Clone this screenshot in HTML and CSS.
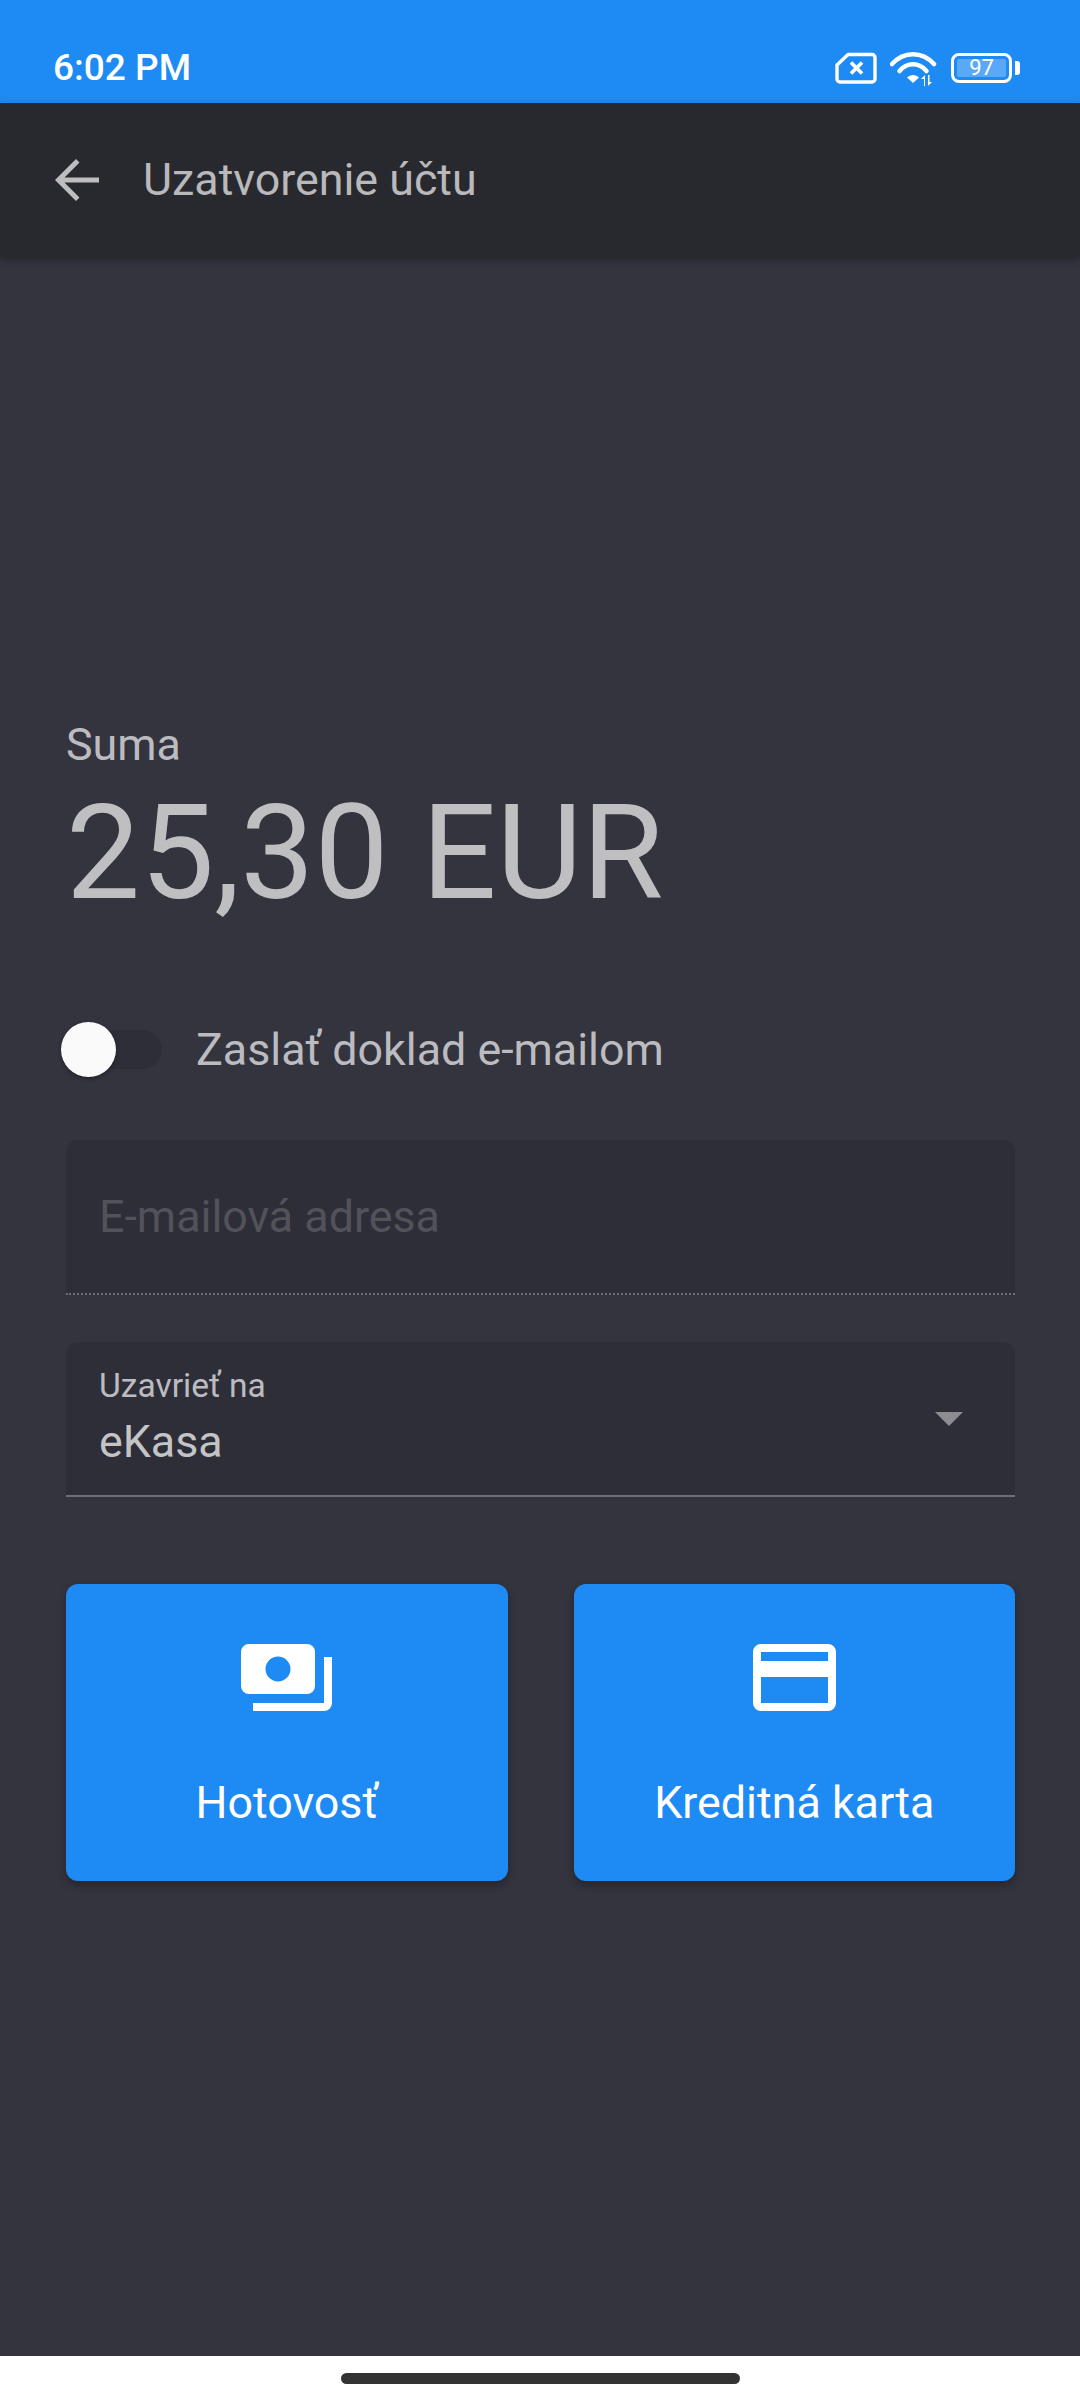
FILE: index.html
```html
<!DOCTYPE html>
<html lang="sk">
<head>
<meta charset="utf-8">
<title>Uzatvorenie účtu</title>
<link rel="stylesheet" href="styles.css">
</head>
<body>
<div class="screen">
  <header class="statusbar">
    <span class="time">6:02 PM</span>
    <div class="status-icons">
      <svg class="ic-sim" width="42" height="32" viewBox="0 0 42 32"><path d="M13 2.500H37a3 3 0 0 1 3 3V27a3 3 0 0 1-3 3H5a3 3 0 0 1-3-3V13z" fill="none" stroke="#fff" stroke-width="3.400" stroke-linejoin="round"/><path d="M16 10.500l11 11M27 10.500l-11 11" stroke="#fff" stroke-width="3.600"/></svg>
      <svg class="ic-wifi" width="48" height="36" viewBox="0 0 48 36"><path d="M2 14C14 1 32 1 44 14" fill="none" stroke="#fff" stroke-width="4.500" stroke-linecap="round"/><path d="M9.500 21C17 12 29 12 36.500 21" fill="none" stroke="#fff" stroke-width="4.500" stroke-linecap="round"/><path d="M17 27.500C20.500 24 25.500 24 29 27.500L23 33z" fill="#fff"/><path d="M34 36v-7h-3l4-4v11zM38 25v11l4-4h-2.500v-7z" fill="#fff"/></svg>
      <div class="battery"><div class="battery-body"><span class="battery-fill">97</span></div><span class="battery-tip"></span></div>
    </div>
  </header>
  <div class="appbar">
    <svg class="back" width="44" height="44" viewBox="0 0 44 44"><path d="M44 24.500H9.500l15 15-3.500 3.500L0 22 21 1l3.500 3.500-15 15H44z" fill="#bdbdc0"/></svg>
    <h1 class="title">Uzatvorenie účtu</h1>
  </div>
  <main class="content">
    <div class="sum-label">Suma</div>
    <div class="sum-value">25,30 EUR</div>
    <div class="toggle-row">
      <div class="toggle"><span class="track"></span><span class="knob"></span></div>
      <span class="toggle-label">Zaslať doklad e-mailom</span>
    </div>
    <div class="field field-email"><span class="placeholder">E-mailová adresa</span></div>
    <div class="field field-select">
      <div class="select-text">
        <span class="select-label">Uzavrieť na</span>
        <span class="select-value">eKasa</span>
      </div>
      <span class="caret"></span>
    </div>
    <div class="actions">
      <button class="action">
        <svg width="91" height="67" viewBox="0 0 91 67"><path d="M8 0H66a8 8 0 0 1 8 8V42a8 8 0 0 1-8 8H8a8 8 0 0 1-8-8V8a8 8 0 0 1 8-8zM37 12.500a12.500 12.500 0 1 0 0 25 12.500 12.500 0 0 0 0-25z" fill="#fff" fill-rule="evenodd"/><path d="M12 63H83a4 4 0 0 0 4-4V13" fill="none" stroke="#fff" stroke-width="8"/></svg>
        <span>Hotovosť</span>
      </button>
      <button class="action">
        <svg width="83" height="67" viewBox="0 0 83 67"><path d="M8 0H75a8 8 0 0 1 8 8V59a8 8 0 0 1-8 8H8a8 8 0 0 1-8-8V8a8 8 0 0 1 8-8zM8 8V17H75V8zM8 33V59H75V33z" fill="#fff" fill-rule="evenodd"/></svg>
        <span>Kreditná karta</span>
      </button>
    </div>
  </main>
  <footer class="navbar"><span class="home"></span></footer>
</div>
</body>
</html>
```

FILE: styles.css
```css
* { box-sizing: border-box; }
html, body { margin: 0; padding: 0; }
body { width: 1080px; height: 2400px; overflow: hidden; font-family: Roboto, "Liberation Sans", sans-serif; background: #33343e; }
.screen { display: flex; flex-direction: column; width: 1080px; height: 2400px; }

.statusbar { height: 103px; background: #1e8bf5; color: #fff; display: flex; align-items: flex-end; justify-content: space-between; padding: 0 60px 17px 53px; flex: none; }
.time { font-size: 37px; font-weight: 500; line-height: 36px; }
.status-icons { display: flex; align-items: center; gap: 13px; }
.battery { display: flex; align-items: center; gap: 3px; }
.battery-body { width: 61px; height: 30px; border: 3px solid #fff; border-radius: 8px; padding: 3px; display: flex; }
.battery-fill { flex: 1; background: #5aa9f8; border-radius: 2px; color: #fff; font-size: 22px; line-height: 18px; text-align: center; }
.battery-tip { width: 5px; height: 14px; background: #fff; border-radius: 0 3px 3px 0; }

.appbar { height: 154px; flex: none; background: #28292f; display: flex; align-items: center; padding-left: 55px; box-shadow: 0 3px 8px rgba(0,0,0,.3); position: relative; }
.title { margin: 0 0 0 44px; font-size: 44.8px; font-weight: 400; color: #b9b9bc; line-height: 50px; }

.content { flex: 1; display: flex; flex-direction: column; padding: 463px 65px 0 66px; }
.sum-label { font-size: 44.8px; line-height: 50px; color: #bcbcc0; }
.sum-value { font-size: 132px; line-height: 156px; color: #bfbfc2; margin-top: 5px; }

.toggle-row { display: flex; align-items: center; margin-top: 91px; height: 56px; }
.toggle { position: relative; width: 96px; height: 56px; margin-left: -5px; }
.track { position: absolute; left: 10px; top: 8px; width: 91px; height: 39px; border-radius: 20px; background: #2d2e37; }
.knob { position: absolute; left: 0; top: 0; width: 55px; height: 55px; border-radius: 50%; background: #fafafa; box-shadow: 0 2px 4px rgba(0,0,0,.35); }
.toggle-label { margin-left: 39px; font-size: 44.8px; line-height: 54px; color: #bcbcc0; }

.field { background: #2e2e38; border-radius: 12px 12px 0 0; position: relative; }
.field-email { height: 155px; margin-top: 62px; display: flex; align-items: center; padding: 0 34px 0 33px; border-bottom: 2px dotted #6e6e75; }
.placeholder { font-size: 44.8px; color: #52525b; }
.field-select { height: 155px; margin-top: 47px; display: flex; align-items: center; justify-content: space-between; padding: 0 52px 0 33px; border-bottom: 2px solid #6e6e75; }
.select-text { display: flex; flex-direction: column; padding-bottom: 5px; }
.select-label { font-size: 33.6px; line-height: 40px; color: #bcbcc0; }
.select-value { font-size: 44.8px; line-height: 50px; color: #c4c4c6; margin-top: 11px; }
.caret { width: 0; height: 0; border-left: 14px solid transparent; border-right: 14px solid transparent; border-top: 14px solid #8c8c91; }

.actions { display: flex; gap: 66px; margin-top: 87px; }
.action { flex: 1; height: 297px; border: 0; border-radius: 12px; background: #1e8bf5; color: #fff; font-family: inherit; font-size: 44.8px; display: flex; flex-direction: column; align-items: center; padding: 60px 0 0; box-shadow: 0 4px 8px rgba(0,0,0,.3); }
.action span { margin-top: 67px; line-height: 50px; }

.navbar { height: 44px; flex: none; background: #fff; display: flex; align-items: center; justify-content: center; margin-top: auto; }
.home { width: 399px; height: 11px; border-radius: 6px; background: #333; }
```
